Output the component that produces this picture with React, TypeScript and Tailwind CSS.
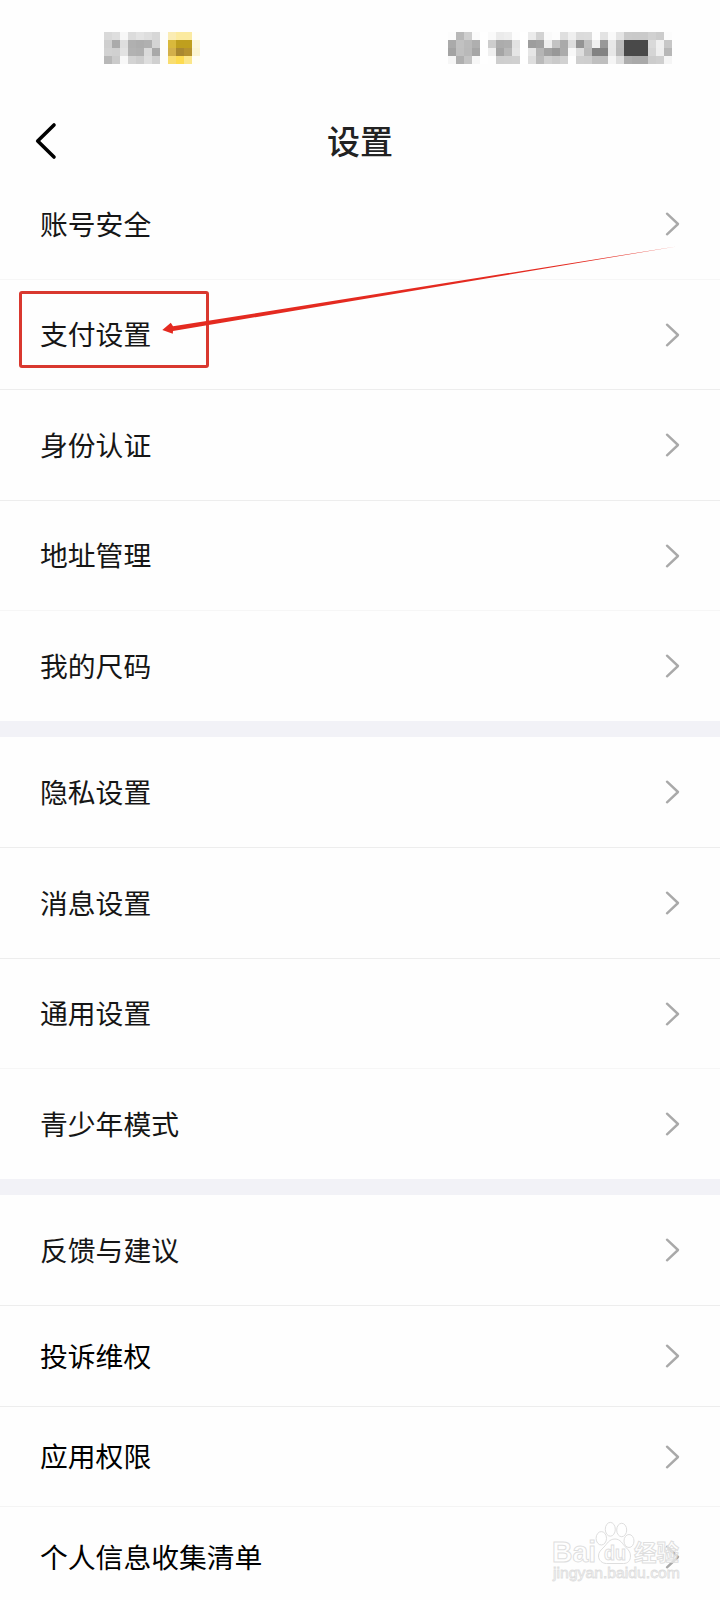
type Item = {
  label: string;
  rowClass: string;
  textClass?: string;
};

const groups: Item[][] = [
  [
    { label: "账号安全", rowClass: "h-[111px] border-b border-[#f6f6f6]" },
    { label: "支付设置", rowClass: "h-[110px] border-b border-[#ededed]" },
    { label: "身份认证", rowClass: "h-[111px] border-b border-[#ededed]" },
    { label: "地址管理", rowClass: "h-[110px] border-b border-[#f6f6f6]" },
    { label: "我的尺码", rowClass: "h-[110px]" },
  ],
  [
    { label: "隐私设置", rowClass: "h-[111px] border-b border-[#ededed]" },
    { label: "消息设置", rowClass: "h-[111px] border-b border-[#ededed]" },
    { label: "通用设置", rowClass: "h-[110px] border-b border-[#f6f6f6]" },
    { label: "青少年模式", rowClass: "h-[110px]" },
  ],
  [
    { label: "反馈与建议", rowClass: "h-[111px] border-b border-[#ededed]" },
    { label: "投诉维权", rowClass: "h-[101px] border-b border-[#ededed]", textClass: "text-black" },
    { label: "应用权限", rowClass: "h-[100px] border-b border-[#f4f4f4]", textClass: "text-black" },
    { label: "个人信息收集清单", rowClass: "h-[100px]", textClass: "text-black" },
  ],
];

// pixelated status bar, one hex colour per 8px cell
const leftMosaic = [
  ["#d9d9d9", "#dedede", "#f7f7f7", "#dcdcdc", "#e3e3e3", "#dedede", "#d7d7d7", "#fdfdfb", "#faecb4", "#fbeaa0", "#fbeaa0", "#fffef8"],
  ["#cfcfcf", "#ababab", "#dedede", "#b0b0b0", "#adadad", "#b0b0b0", "#d4d4d4", "#fdfdfb", "#d9b93c", "#bf9f1e", "#bf9f1e", "#fcf7dc"],
  ["#d2d2d2", "#d0d0d0", "#e2e2e2", "#b2b2b2", "#b0b0b0", "#dadada", "#a9a9a9", "#fdfdfb", "#d3b04a", "#a98830", "#b5922f", "#fbf5d4"],
  ["#b8b8b8", "#cbcbcb", "#f8f8f8", "#d3d3d3", "#cdcdcd", "#dedede", "#d0d0d0", "#fdfdfb", "#f9dd70", "#fddb50", "#fbe68a", "#fffef6"],
];

const rightMosaic = [
  ["#fcfcfc", "#b8b8b8", "#cecece", "#fbfbfb", "#ffffff", "#fafafa", "#ebebeb", "#eeeeee", "#fdfdfd", "#ffffff", "#ebebeb", "#d2d2d2", "#fafafa", "#fdfdfd", "#dfdfdf", "#efefef", "#dbdbdb", "#dcdcdc", "#fdfdfd", "#e3e3e3", "#f9f9f9", "#e4e4e4", "#cacaca", "#c9c9c9", "#cacaca", "#d1d1d1", "#cccccc", "#fcfcfc"],
  ["#aaaaaa", "#c1c1c1", "#bababa", "#afafaf", "#ffffff", "#cdcdcd", "#acacac", "#aeaeae", "#e2e2e2", "#ffffff", "#9d9d9d", "#a1a1a1", "#eeeeee", "#c3c3c3", "#aaaaaa", "#dddddd", "#949494", "#bfbfbf", "#f0f0f0", "#989898", "#e8e8e8", "#bcbcbc", "#494949", "#494949", "#494949", "#d9d9d9", "#efefef", "#c7c7c7"],
  ["#a3a3a3", "#c0c0c0", "#b9b9b9", "#a6a6a6", "#ffffff", "#f0f0f0", "#a5a5a5", "#b8b8b8", "#e5e5e5", "#ffffff", "#e6e6e6", "#b5b5b5", "#a2a2a2", "#989898", "#ababab", "#f8f8f8", "#dddddd", "#bbbbbb", "#828282", "#828282", "#e7e7e7", "#bababa", "#494949", "#494949", "#494949", "#d5d5d5", "#eeeeee", "#b7b7b7"],
  ["#f6f6f6", "#afafaf", "#c3c3c3", "#f7f7f7", "#ffffff", "#fefefe", "#cecece", "#cfcfcf", "#d0d0d0", "#ffffff", "#dedede", "#bababa", "#d0d0d0", "#cacaca", "#d1d1d1", "#fefefe", "#cfcfcf", "#cecece", "#bfbfbf", "#bebebe", "#f5f5f5", "#dedede", "#adadad", "#a9a9a9", "#a9a9a9", "#cccccc", "#cfcfcf", "#f5f5f5"],
];

function Mosaic({ cells }: { cells: string[][] }) {
  return (
    <div className="flex flex-col">
      {cells.map((row, y) => (
        <div key={y} className="flex">
          {row.map((color, x) => (
            <span key={x} className="size-2" style={{ backgroundColor: color }} />
          ))}
        </div>
      ))}
    </div>
  );
}

function Chevron() {
  return (
    <svg className="h-6 w-4" viewBox="0 0 16 24" fill="none" stroke="#a9a9a9" strokeWidth="2.4" strokeLinecap="round" strokeLinejoin="round">
      <path d="M3 1.700 14 12 3 22.300" />
    </svg>
  );
}

function Row({ item }: { item: Item }) {
  return (
    <li className={`flex items-center justify-between pr-10 pl-10 ${item.rowClass}`}>
      <span className={`pb-[3px] text-[27.8px] leading-10 ${item.textClass ?? "text-[#161616]"}`}>{item.label}</span>
      <Chevron />
    </li>
  );
}

function Annotation() {
  return (
    <>
      <div className="absolute top-[290.500px] left-[19px] h-[77px] w-[190px] rounded-[3px] border-3 border-[#d9382f]" />
      <svg className="absolute top-[240px] left-[156px]" width="530" height="100" viewBox="156 240 530 100">
        <path d="M678 246.200 173 326.300 170.800 322.800 162.300 330 172.800 333.800 173 331Z" fill="#e42a20" />
      </svg>
    </>
  );
}

function Watermark() {
  return (
    <svg
      className="absolute top-[1515px] left-[545px]"
      width="145"
      height="75"
      viewBox="545 1515 145 75"
      fill="#ffffff"
      fillOpacity="0.6"
      stroke="#dedede"
      strokeWidth="1"
      fontFamily="'Liberation Sans', 'Noto Sans CJK SC', sans-serif"
    >
      <text x="552" y="1562" fontSize="29" fontWeight="700" textLength="44" lengthAdjust="spacingAndGlyphs">Bai</text>
      <ellipse cx="601.3" cy="1538.3" rx="5.2" ry="6.7" />
      <ellipse cx="610.3" cy="1529.3" rx="5" ry="6.9" />
      <ellipse cx="621.7" cy="1530" rx="5" ry="6.7" />
      <ellipse cx="629" cy="1541" rx="5" ry="6.5" />
      <path d="M615 1539c-6 0-8 5-11 8-3 3-5.500 5-5.500 9 0 4.500 4 7.500 8 7.500h17c4.500 0 7-3 7-7.500 0-4-2-6-5-9-3-3-5-8-10.500-8Z" />
      <text x="604" y="1560" fontSize="20" fontWeight="700" textLength="22" lengthAdjust="spacingAndGlyphs">du</text>
      <text x="634" y="1561" fontSize="23" fontWeight="700" textLength="45" lengthAdjust="spacingAndGlyphs">经验</text>
      <text x="553" y="1578" fontSize="14" strokeWidth="0.8" textLength="127" lengthAdjust="spacingAndGlyphs">jingyan.baidu.com</text>
    </svg>
  );
}

export default function App() {
  return (
    <main className="relative h-[1600px] w-[720px] overflow-hidden bg-[#fefefe] font-['Noto_Sans_CJK_SC',sans-serif]">
      <div className="flex h-24 items-start justify-between pt-8 pr-12 pl-[104px]">
        <Mosaic cells={leftMosaic} />
        <Mosaic cells={rightMosaic} />
      </div>

      <header className="grid h-[73px] grid-cols-[1fr_auto_1fr] items-center pt-[17px]">
        <svg className="ml-8 h-10 w-7" viewBox="0 0 28 40" fill="none" stroke="#000000" strokeWidth="3.6" strokeLinecap="round" strokeLinejoin="round">
          <path d="M22 4 5.700 20 22 36" />
        </svg>
        <h1 className="pb-[3px] text-[33px] leading-10 font-medium text-[#222222]">设置</h1>
      </header>

      {groups.map((group, i) => (
        <section key={i}>
          {i > 0 && <div className="h-4 bg-[#f2f2f7]" />}
          <ul>
            {group.map((item) => (
              <Row key={item.label} item={item} />
            ))}
          </ul>
        </section>
      ))}

      <Annotation />
      <Watermark />
    </main>
  );
}
